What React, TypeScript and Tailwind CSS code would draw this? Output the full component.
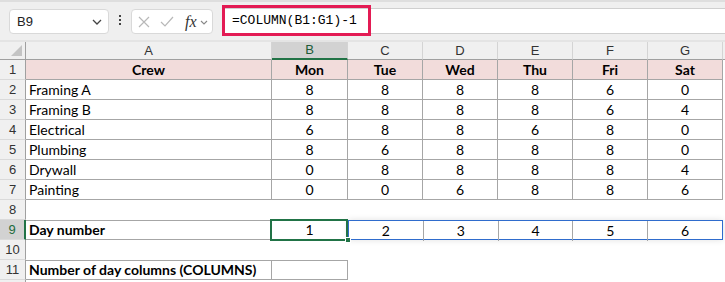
import React from 'react';

const crews = [
    { name: 'Framing A', hours: [8, 8, 8, 8, 6, 0] },
    { name: 'Framing B', hours: [8, 8, 8, 8, 6, 4] },
    { name: 'Electrical', hours: [6, 8, 8, 6, 8, 0] },
    { name: 'Plumbing', hours: [8, 6, 8, 8, 8, 0] },
    { name: 'Drywall', hours: [0, 8, 8, 8, 8, 4] },
    { name: 'Painting', hours: [0, 0, 6, 8, 8, 6] },
];

const days = ['Mon', 'Tue', 'Wed', 'Thu', 'Fri', 'Sat'];
const letters = ['A', 'B', 'C', 'D', 'E', 'F', 'G'];

const RowHead = ({ n, active }: { n?: number; active?: boolean }) => (
    <div
        className={`h-5 flex items-center justify-center text-[13px] font-['Liberation_Sans',sans-serif] border-b border-[#dadada] ${
            active ? 'bg-[#d2d2d2] text-[#1d6b3c] border-r-2 border-r-[#217346]' : 'bg-[#f0f0f0] text-[#333] border-r border-r-[#a0a0a0]'
        }`}
    >
        {n}
    </div>
);

const Cell = ({ children, className = '' }: { children?: React.ReactNode; className?: string }) => (
    <div className={`h-5 flex items-center text-[14px] text-black font-['Lato',sans-serif] leading-none whitespace-nowrap ${className}`}>
        {children}
    </div>
);

const grid = 'border-r border-b border-[#a6a6a6]';

export default function App() {
    return (
        <div className="w-[725px] h-[282px] overflow-hidden bg-white">
            {/* formula bar */}
            <div className="h-[40px] bg-[#efefef] border-t-2 border-[#dedede] flex items-start relative">
                <div className="mt-[7px] ml-[9px] w-[100px] h-[25px] bg-white border border-[#d9d9d9] rounded-[4px] flex items-center justify-between pl-[7px] pr-[6px]">
                    <span className="text-[13px] text-[#222] font-['Liberation_Sans',sans-serif]">B9</span>
                    <svg width="10" height="6" viewBox="0 0 10 6" fill="none" stroke="#444" strokeWidth="1.3">
                        <path d="M1 1l4 4 4-4" />
                    </svg>
                </div>
                <div className="mt-[13px] w-[22px] flex flex-col items-center gap-[2px]">
                    <span className="w-[2px] h-[2px] bg-[#444]" />
                    <span className="w-[2px] h-[2px] bg-[#444]" />
                    <span className="w-[2px] h-[2px] bg-[#444]" />
                </div>
                <div className="mt-[7px] w-[82px] h-[25px] bg-white border border-[#d9d9d9] rounded-[4px] flex items-center pl-[6px]">
                    <svg width="12" height="12" viewBox="0 0 12 12" stroke="#b8b8b8" strokeWidth="1.2">
                        <path d="M1 1l10 10M11 1L1 11" />
                    </svg>
                    <svg className="ml-[10px]" width="14" height="11" viewBox="0 0 14 11" fill="none" stroke="#b8b8b8" strokeWidth="1.2">
                        <path d="M1 6l4 4 8-9" />
                    </svg>
                    <span className="ml-[11px] text-[16px] italic text-[#333] font-['Liberation_Serif',serif] leading-none">fx</span>
                    <svg className="ml-[3px] mt-[2px]" width="8" height="5" viewBox="0 0 8 5" fill="none" stroke="#888" strokeWidth="1.1">
                        <path d="M1 1l3 3 3-3" />
                    </svg>
                </div>
                <div className="mt-[6px] ml-[9px] flex-1 h-[26px] bg-white border-y border-[#cfcfcf] flex items-center pl-[10px]">
                    <span className="text-[13px] text-black font-['Liberation_Mono',monospace]">=COLUMN(B1:G1)-1</span>
                </div>
                <div className="absolute left-[222px] top-[3px] w-[149px] h-[31px] border-[3px] border-[#e31b54] pointer-events-none" />
            </div>

            <div className="h-[2px] bg-[#e4e4e4]" />

            {/* sheet */}
            <div className="grid grid-cols-[26px_246px_76px_75px_75px_75px_75px_75px_2px]">
                {/* column headers */}
                <div className="h-[18px] bg-[#f0f0f0] border-r border-b border-[#a0a0a0] relative">
                    <svg className="absolute right-[3px] bottom-[3px]" width="11" height="11" viewBox="0 0 11 11">
                        <path d="M11 0V11H0Z" fill="#c4c4c4" />
                    </svg>
                </div>
                {letters.map((l) => (
                    <div
                        key={l}
                        className={`h-[18px] flex items-center justify-center text-[13px] font-['Liberation_Sans',sans-serif] border-r border-r-[#d4d4d4] ${
                            l === 'B' ? 'bg-[#d2d2d2] text-[#1d5c38] border-b-2 border-b-[#217346]' : 'bg-[#f0f0f0] text-[#333] border-b border-b-[#a0a0a0]'
                        }`}
                    >
                        {l}
                    </div>
                ))}
                <div className="h-[18px] bg-[#f0f0f0] border-b border-[#a0a0a0]" />

                {/* row 1 */}
                <RowHead n={1} />
                <Cell className={`${grid} bg-[#f2dcdb] justify-center font-bold`}>Crew</Cell>
                {days.map((d) => (
                    <Cell key={d} className={`${grid} bg-[#f2dcdb] justify-center font-bold`}>
                        {d}
                    </Cell>
                ))}
                <div />

                {crews.map((c, i) => (
                    <React.Fragment key={c.name}>
                        <RowHead n={i + 2} />
                        <Cell className={`${grid} pl-[3px]`}>{c.name}</Cell>
                        {c.hours.map((h, j) => (
                            <Cell key={j} className={`${grid} justify-center`}>
                                {h}
                            </Cell>
                        ))}
                        <div />
                    </React.Fragment>
                ))}

                {/* row 8 */}
                <RowHead n={8} />
                <div className="col-span-8 h-5" />

                {/* row 9 */}
                <RowHead n={9} active />
                <Cell className={`${grid} border-t pl-[3px] font-bold`}>Day number</Cell>
                <Cell className={`${grid} border-t justify-center relative z-10`}>
                    1
                    <span className="absolute -left-[2px] -top-[2px] w-[78px] h-[22px] border-2 border-[#217346]" />
                    <span className="absolute right-[-4px] bottom-[-4px] w-[6px] h-[6px] bg-[#217346] border border-white" />
                </Cell>
                <div className="col-span-5 h-5 flex border border-[#2f6ccd] shadow-[0_0_6px_rgba(0,0,0,0.12)]">
                    {[2, 3, 4, 5, 6].map((n, k) => (
                        <Cell key={n} className={`flex-1 justify-center ${k < 4 ? 'border-r border-[#a6a6a6]' : ''}`}>
                            {n}
                        </Cell>
                    ))}
                </div>
                <div />

                {/* row 10 */}
                <RowHead n={10} />
                <div className="col-span-8 h-5" />

                {/* row 11 */}
                <RowHead n={11} />
                <Cell className={`${grid} border-t pl-[3px] font-bold`}>Number of day columns (COLUMNS)</Cell>
                <Cell className={`${grid} border-t`} />
                <div className="col-span-6 h-5" />

                <RowHead />
                <div className="col-span-8 h-5" />
            </div>
        </div>
    );
}
